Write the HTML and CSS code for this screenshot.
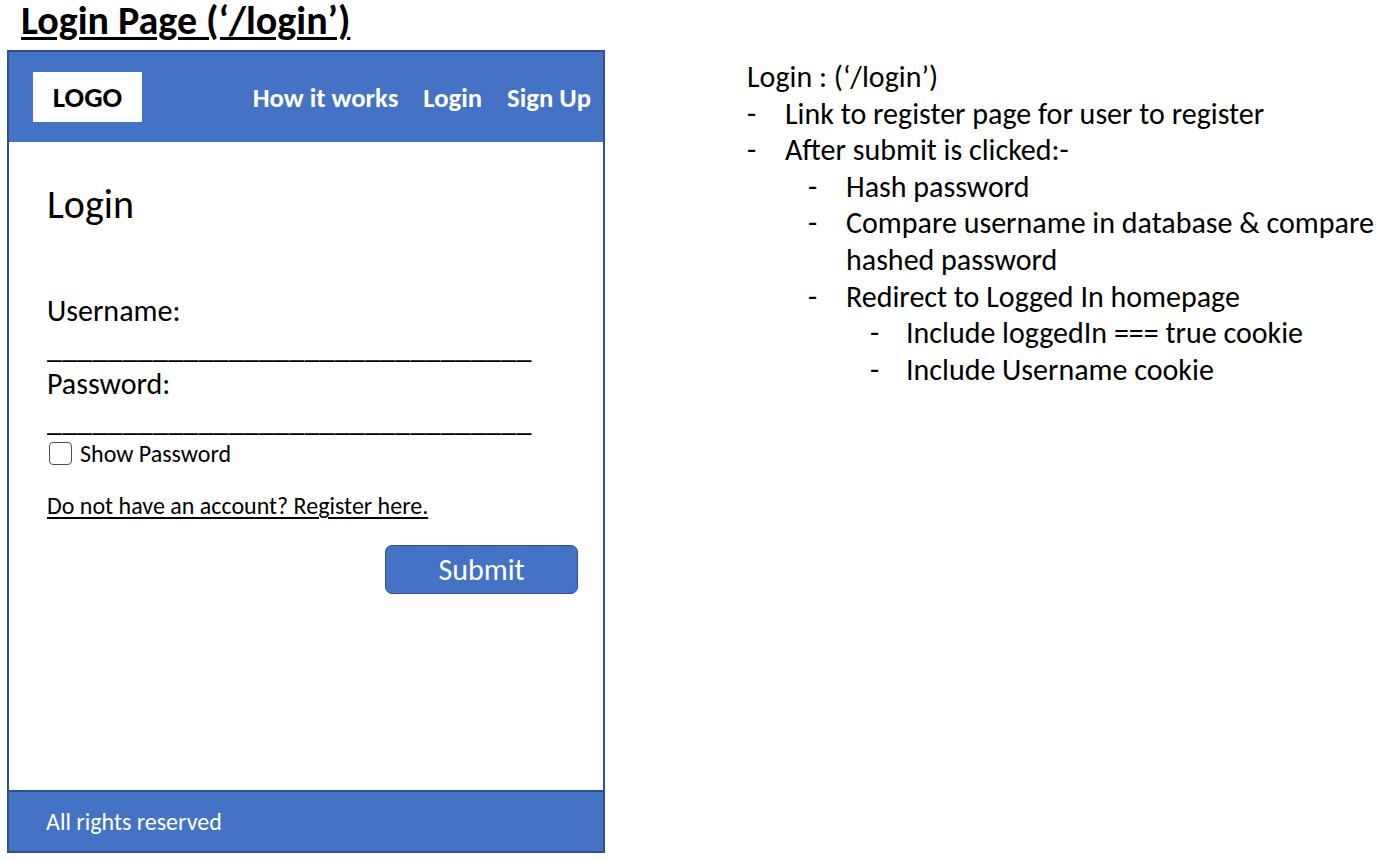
FILE: index.html
```html
<!DOCTYPE html>
<html lang="en">
<head>
<meta charset="utf-8">
<title>Login Page</title>
<link rel="stylesheet" href="styles.css">
</head>
<body>
<div class="page">
  <div class="left">
    <h1 class="title">Login Page (‘/login’)</h1>
    <div class="frame">
      <header class="header">
        <div class="logo">LOGO</div>
        <nav class="nav">
          <span>How it works</span>
          <span>Login</span>
          <span>Sign Up</span>
        </nav>
      </header>
      <main class="main">
        <h2 class="heading">Login</h2>
        <div class="label">Username:</div>
        <div class="blank">________________________________</div>
        <div class="label">Password:</div>
        <div class="blank">________________________________</div>
        <label class="check-row"><span class="checkbox"></span><span>Show Password</span></label>
        <a class="register" href="#">Do not have an account? Register here.</a>
        <div class="actions"><button class="submit" type="button">Submit</button></div>
      </main>
      <footer class="footer">All rights reserved</footer>
    </div>
  </div>
  <div class="notes">
    <div class="note-title">Login : (‘/login’)</div>
    <ul class="l1">
      <li><span class="dash">-</span><span>Link to register page for user to register</span></li>
      <li><span class="dash">-</span><span>After submit is clicked:-</span></li>
    </ul>
    <ul class="l2">
      <li><span class="dash">-</span><span>Hash password</span></li>
      <li><span class="dash">-</span><span>Compare username in database &amp; compare<br>hashed password</span></li>
      <li><span class="dash">-</span><span>Redirect to Logged In homepage</span></li>
    </ul>
    <ul class="l3">
      <li><span class="dash">-</span><span>Include loggedIn === true cookie</span></li>
      <li><span class="dash">-</span><span>Include Username cookie</span></li>
    </ul>
  </div>
</div>
</body>
</html>
```
FILE: styles.css
```css
* { box-sizing: border-box; }
html, body { margin: 0; padding: 0; background: #fff; }
body {
  font-family: Carlito, Lato, "Open Sans", sans-serif;
  color: #000;
  width: 1390px;
  height: 861px;
  overflow: hidden;
}
.page { display: flex; }
.left { width: 605px; }
.title {
  margin: 0 0 8px 21px;
  font-size: 40px;
  line-height: 42px;
  font-weight: bold;
  text-decoration: underline;
  text-decoration-thickness: 3px;
  text-underline-offset: 3px;
  white-space: nowrap;
}
.frame {
  margin-left: 7px;
  width: 598px;
  height: 803px;
  border: 2px solid #2f528f;
  display: flex;
  flex-direction: column;
}
.header {
  height: 90px;
  background: #4472c4;
  display: flex;
  align-items: center;
  justify-content: space-between;
  padding: 0 12px 0 24px;
}
.logo {
  width: 109px;
  height: 50px;
  background: #fff;
  display: flex;
  align-items: center;
  justify-content: center;
  font-size: 29px;
  font-weight: bold;
}
.nav {
  display: flex;
  gap: 25px;
  color: #fff;
  font-weight: bold;
  font-size: 26.7px;
  padding-top: 1px;
}
.main {
  flex: 1;
  padding: 38px 25px 0 38px;
  display: flex;
  flex-direction: column;
  align-items: flex-start;
}
.heading {
  margin: 0 0 64px;
  font-size: 40px;
  font-weight: normal;
  line-height: 49px;
}
.label, .blank {
  font-size: 30px;
  line-height: 36.6px;
}
.blank { white-space: nowrap; letter-spacing: 0.2px; }
.check-row {
  margin-top: 2px;
  display: flex;
  align-items: center;
  gap: 8px;
  font-size: 24px;
  line-height: 25px;
  padding-left: 2px;
}
.checkbox {
  width: 23px;
  height: 23px;
  border: 1.5px solid #3d5178;
  border-radius: 4px;
  background: #fff;
}
.register {
  margin-top: 25px;
  font-size: 24px;
  line-height: 29.3px;
  color: #000;
  text-decoration: underline;
  text-underline-offset: 3px;
}
.actions {
  align-self: stretch;
  display: flex;
  justify-content: flex-end;
  margin-top: 24px;
}
.submit {
  width: 193px;
  height: 49px;
  background: #4472c4;
  border: 1.5px solid #2f528f;
  border-radius: 7px;
  color: #fff;
  font-family: inherit;
  font-size: 30px;
  padding: 0;
}
.footer {
  height: 61px;
  background: #4472c4;
  border-top: 2px solid #2f528f;
  color: #fff;
  font-size: 24px;
  display: flex;
  align-items: center;
  padding-left: 37px;
  padding-bottom: 1px;
}
.notes {
  margin-left: 142px;
  padding-top: 59px;
  font-size: 30px;
  line-height: 36.6px;
  white-space: nowrap;
}
.notes ul { list-style: none; margin: 0; padding: 0; }
.notes li { display: flex; }
.l1 .dash { width: 38px; }
.notes .l2 { padding-left: 61px; }
.l2 .dash { width: 38px; }
.notes .l3 { padding-left: 123px; }
.l3 .dash { width: 36px; }
```
